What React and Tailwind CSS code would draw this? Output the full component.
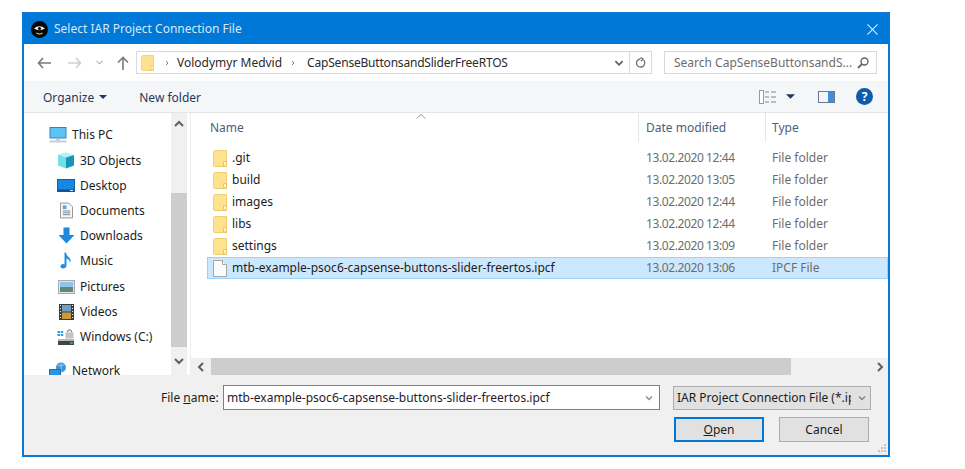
import React from "react";

const folders = [
  { name: ".git", date: "13.02.2020 12:44" },
  { name: "build", date: "13.02.2020 13:05" },
  { name: "images", date: "13.02.2020 12:44" },
  { name: "libs", date: "13.02.2020 12:44" },
  { name: "settings", date: "13.02.2020 13:09" },
];

const FILE_NAME = "mtb-example-psoc6-capsense-buttons-slider-freertos.ipcf";

function Folder({ className }) {
  return (
    <svg viewBox="0 0 14 17" className={className}>
      <path d="M0.5 2.5 Q0.5 0.5 2.5 0.5 H13.5 V16.5 H2 Q0.5 16.5 0.5 15 Z" fill="#fde38f" stroke="#f0cf72" />
      <path d="M10.5 16 V11.5 H13.5 V16 Z" fill="#fff3c4" stroke="#e6bf55" strokeWidth="0.8" />
    </svg>
  );
}

function FileIcon() {
  return (
    <svg viewBox="0 0 14 17" className="w-[14px] h-[17px] shrink-0">
      <path d="M0.5 0.5 H9.5 L13.5 4.5 V16.5 H0.5 Z" fill="#fbfbfb" stroke="#a5a5a5" />
      <path d="M9.5 0.5 V4.5 H13.5" fill="#fff" stroke="#a5a5a5" />
    </svg>
  );
}

function NavIcon({ name }) {
  if (name === "pc")
    return (
      <svg viewBox="0 0 18 16" className="w-[18px] h-[16px]">
        <rect x="1" y="0.5" width="16" height="10.5" fill="#5cc3f5" stroke="#3f7fb5" />
        <rect x="7" y="11" width="4" height="2.5" fill="#b8c4cf" />
        <rect x="0.5" y="13.5" width="17" height="2" fill="#c4ced6" />
      </svg>
    );
  if (name === "3d")
    return (
      <svg viewBox="0 0 18 17" className="w-[18px] h-[17px]">
        <path d="M9 0.5 L1 3 V13.5 L9 16.5 Z" fill="#6fe0e6" />
        <path d="M1 3 L9 5.5 L17 3 L9 0.5 Z" fill="#b5f2f2" />
        <path d="M9 5.5 V16.5 L17 13.5 V3 Z" fill="#1a95b8" />
      </svg>
    );
  if (name === "desktop")
    return (
      <svg viewBox="0 0 18 13" className="w-[18px] h-[13px]">
        <rect x="0.5" y="0.5" width="17" height="12" fill="#1787e0" stroke="#0e62aa" />
        <rect x="1" y="10.5" width="16" height="2" fill="#0c4f91" />
        <rect x="13" y="11" width="3" height="1" fill="#cfe6f8" />
      </svg>
    );
  if (name === "docs")
    return (
      <svg viewBox="0 0 14 17" className="w-[13px] h-[17px]">
        <path d="M0.5 0.5 H9.5 L13.5 4.5 V16.5 H0.5 Z" fill="#f7f7f7" stroke="#8c8c8c" />
        <rect x="3" y="3" width="4" height="4" fill="#5da6dd" />
        <path d="M3 9 H11 M3 11 H11 M3 13 H11" stroke="#6f8294" />
      </svg>
    );
  if (name === "down")
    return (
      <svg viewBox="0 0 17 17" className="w-[17px] h-[17px]">
        <path d="M5.5 0.5 H11.5 V8 H16.5 L8.5 16.5 L0.5 8 H5.5 Z" fill="#2188dd" />
      </svg>
    );
  if (name === "music")
    return (
      <svg viewBox="0 0 12 17" className="w-[12px] h-[17px]">
        <path d="M4.5 0.5 H6 Q6.5 4 9.5 6 Q11.5 8 10 11 Q10 7.5 6.5 6.5 V13.5 Q6 16.5 3 16.5 Q0.5 16.5 0.5 14.5 Q0.5 12 3 12 Q4 12 4.5 12.5 Z" fill="#1f8fe6" />
      </svg>
    );
  if (name === "pics")
    return (
      <svg viewBox="0 0 17 14" className="w-[17px] h-[14px]">
        <rect x="0.5" y="0.5" width="16" height="13" fill="#e4e4e4" stroke="#a9a9a9" />
        <rect x="2" y="2" width="13" height="5" fill="#8fc3e8" />
        <rect x="2" y="7" width="13" height="5" fill="#5f8a74" />
      </svg>
    );
  if (name === "video")
    return (
      <svg viewBox="0 0 15 16" className="w-[15px] h-[16px]">
        <rect x="0" y="0" width="15" height="16" fill="#3c3c3c" />
        <rect x="3" y="1" width="9" height="6.5" fill="#6e9fc4" />
        <rect x="3" y="8.5" width="9" height="6.5" fill="#c9993c" />
        <path d="M1 1.5 H2 M1 4.5 H2 M1 7.5 H2 M1 10.5 H2 M1 13.5 H2 M13 1.5 H14 M13 4.5 H14 M13 7.5 H14 M13 10.5 H14 M13 13.5 H14" stroke="#e8e8e8" />
      </svg>
    );
  if (name === "drive")
    return (
      <svg viewBox="0 0 18 16" className="w-[18px] h-[16px]">
        <path d="M0.5 2 H3 V4 H0.5 Z M3.8 2 H6.2 V4 H3.8 Z M0.5 5 H3 V7 H0.5 Z M3.8 5 H6.2 V7 H3.8 Z" fill="#2c9be8" />
        <rect x="8.5" y="3.5" width="8" height="6" fill="#c3c3c3" />
        <path d="M10.5 3.5 V2 Q12.5 0 14.5 2 V3.5" fill="none" stroke="#9a9a9a" strokeWidth="1.2" />
        <rect x="1" y="10" width="16" height="2" fill="#b9b9b9" />
        <rect x="1" y="12" width="16" height="4" fill="#3f4446" />
        <rect x="13" y="13.5" width="3" height="1" fill="#7fe05a" />
      </svg>
    );
  return (
    <svg viewBox="0 0 18 16" className="w-[18px] h-[16px]">
      <circle cx="12" cy="5.5" r="5" fill="#3f97d9" />
      <path d="M8.5 3 Q12 5 15.5 2.5 M12 0.5 V10" stroke="#9fd2f2" strokeWidth="0.8" fill="none" />
      <rect x="0.5" y="7.5" width="11" height="7.5" fill="#2b93e4" stroke="#1b6fb5" />
    </svg>
  );
}

function NavItem({ icon, label, className }) {
  return (
    <div className={`flex items-center ${className}`}>
      <div className="flex justify-center w-[18px] mr-[5px]">
        <NavIcon name={icon} />
      </div>
      <span className="leading-[13px]">{label}</span>
    </div>
  );
}

function Chevron({ dir, className }) {
  const d = {
    up: "M1 6 L5 2 L9 6",
    down: "M1 2 L5 6 L9 2",
    left: "M6 1 L2 5 L6 9",
    right: "M2 1 L6 5 L2 9",
  }[dir];
  const box = dir === "up" || dir === "down" ? "0 0 10 8" : "0 0 8 10";
  const size = dir === "up" || dir === "down" ? "w-[10px] h-[8px]" : "w-[8px] h-[10px]";
  return (
    <svg viewBox={box} className={`${size} ${className}`}>
      <path d={d} fill="none" stroke="#606060" strokeWidth="2" />
    </svg>
  );
}

function Row({ name, date, type, selected, icon }) {
  return (
    <div
      className={`flex items-center h-[22px] ml-[16px] pl-[5px] border ${
        selected ? "bg-[#cce8ff] border-[#99d1ff]" : "border-transparent"
      }`}
    >
      <div className="w-[14px] flex justify-center shrink-0">{icon}</div>
      <span className="ml-[5px] w-[414px] shrink-0 text-[#1c1c1c] whitespace-nowrap">{name}</span>
      <span className="w-[126px] shrink-0 text-[#6d6d6d] tracking-[-0.4px]">{date}</span>
      <span className="text-[#6d6d6d]">{type}</span>
    </div>
  );
}

export default function App() {
  return (
    <div className="w-[965px] h-[469px] bg-white pt-[12px] pl-[22px] text-[12px] font-['Noto_Sans','Open_Sans',sans-serif] overflow-hidden">
      <div className="w-[868px] h-[445px] border-2 border-[#0a78d7] flex flex-col bg-white">
        {/* title bar */}
        <div className="h-[30px] shrink-0 bg-[#0078d7] flex items-center text-white">
          <svg viewBox="0 0 17 17" className="w-[17px] h-[17px] ml-[7px]">
            <circle cx="8.5" cy="8.5" r="8.5" fill="#060606" />
            <path d="M3 7.5 Q8.5 3 14 7.5 Q8.5 11 3 7.5 Z" fill="#f5f5f5" />
            <circle cx="8.5" cy="7.5" r="1.6" fill="#060606" />
            <path d="M5.5 12 Q8.5 14 11.5 12" stroke="#f4d43a" strokeWidth="1.2" fill="none" />
          </svg>
          <span className="ml-[6px] text-[#d7e9f8]">Select IAR Project Connection File</span>
          <svg viewBox="0 0 12 12" className="w-[11px] h-[11px] ml-auto mr-[10px]">
            <path d="M0.5 0.5 L11.5 11.5 M11.5 0.5 L0.5 11.5" stroke="#e6f2fb" strokeWidth="1.1" />
          </svg>
        </div>

        {/* address row */}
        <div className="h-[37px] shrink-0 flex items-center bg-white">
          <svg viewBox="0 0 14 12" className="w-[14px] h-[12px] ml-[13px]">
            <path d="M6 1 L1.5 6 L6 11 M1.5 6 H14" fill="none" stroke="#7a7a7a" strokeWidth="1.6" />
          </svg>
          <svg viewBox="0 0 14 12" className="w-[14px] h-[12px] ml-[17px]">
            <path d="M8 1 L12.5 6 L8 11 M12.5 6 H0" fill="none" stroke="#d0d0d0" strokeWidth="1.6" />
          </svg>
          <svg viewBox="0 0 8 5" className="w-[7px] h-[5px] ml-[14px]">
            <path d="M0.5 0.5 L4 4 L7.5 0.5" fill="none" stroke="#a8a8a8" strokeWidth="1.2" />
          </svg>
          <svg viewBox="0 0 12 14" className="w-[12px] h-[14px] ml-[14px]">
            <path d="M1 6.5 L6 1.5 L11 6.5 M6 1.5 V14" fill="none" stroke="#7a7a7a" strokeWidth="1.6" />
          </svg>
          <div className="ml-[7px] w-[516px] h-[23px] border border-[#d9d9d9] flex items-center text-[#2b2b2b]">
            <Folder className="w-[13px] h-[16px] ml-[4px]" />
            <Chevron dir="right" className="ml-[9px] scale-50 opacity-80" />
            <span className="ml-[6px]">Volodymyr Medvid</span>
            <Chevron dir="right" className="ml-[7px] scale-50 opacity-80" />
            <span className="ml-[10px] tracking-[-0.2px]">CapSenseButtonsandSliderFreeRTOS</span>
            <Chevron dir="down" className="ml-auto mr-[5px] scale-90" />
            <div className="w-px h-full bg-[#d9d9d9]" />
            <svg viewBox="0 0 12 12" className="w-[11px] h-[12px] mx-[5px]">
              <path d="M9.5 3 A4.5 4.5 0 1 1 6 1.5 M6 0 L9 1.7 L6.5 4" fill="none" stroke="#666" strokeWidth="1.3" />
            </svg>
          </div>
          <div className="ml-[12px] w-[213px] h-[23px] border border-[#d9d9d9] flex items-center text-[#6d6d6d] pl-[9px]">
            <span className="whitespace-nowrap">Search CapSenseButtonsandS...</span>
            <svg viewBox="0 0 12 12" className="w-[12px] h-[12px] ml-auto mr-[7px]">
              <circle cx="7.5" cy="4.5" r="3.5" fill="none" stroke="#666" strokeWidth="1.4" />
              <path d="M5 7 L1 11" stroke="#666" strokeWidth="1.8" />
            </svg>
          </div>
        </div>

        {/* command bar */}
        <div className="h-[32px] shrink-0 bg-[#f5f6f7] border-b border-[#e5e5e5] flex items-center text-[#1e395b]">
          <span className="ml-[19px] pt-[2px]">Organize</span>
          <svg viewBox="0 0 8 4" className="w-[8px] h-[4px] ml-[5px]">
            <path d="M0 0 H8 L4 4 Z" fill="#1e395b" />
          </svg>
          <span className="ml-[32px] pt-[2px]">New folder</span>
          <svg viewBox="0 0 17 14" className="w-[17px] h-[14px] ml-auto">
            <rect x="0.5" y="0.5" width="4" height="13" fill="#fff" stroke="#9a9a9a" />
            <path d="M6 2 H10 M12 2 H17 M6 7 H10 M12 7 H17 M6 12 H10 M12 12 H17" stroke="#7c8794" />
          </svg>
          <svg viewBox="0 0 8 4" className="w-[9px] h-[5px] ml-[10px]">
            <path d="M0 0 H8 L4 4 Z" fill="#1e395b" />
          </svg>
          <svg viewBox="0 0 17 12" className="w-[17px] h-[12px] ml-[23px]">
            <rect x="0.5" y="0.5" width="16" height="11" fill="#f3f6f9" stroke="#6b7a8a" />
            <rect x="10" y="1" width="6" height="10" fill="#3e8fdc" />
          </svg>
          <div className="w-[17px] h-[17px] rounded-full bg-[#0e5cae] text-white font-bold text-[12px] flex items-center justify-center ml-[21px] mr-[15px]">
            ?
          </div>
        </div>

        {/* main area */}
        <div className="h-[262px] shrink-0 flex bg-white">
          <div className="w-[147px] shrink-0 text-[#1c1c1c] pt-[9px]">
            <NavItem icon="pc" label="This PC" className="h-[25px] pl-[25px]" />
            <NavItem icon="3d" label="3D Objects" className="h-[25px] pl-[33px] mt-[1px]" />
            <NavItem icon="desktop" label="Desktop" className="h-[25px] pl-[33px]" />
            <NavItem icon="docs" label="Documents" className="h-[25px] pl-[33px]" />
            <NavItem icon="down" label="Downloads" className="h-[25px] pl-[33px]" />
            <NavItem icon="music" label="Music" className="h-[25px] pl-[33px]" />
            <NavItem icon="pics" label="Pictures" className="h-[25px] pl-[33px] mt-[1px]" />
            <NavItem icon="video" label="Videos" className="h-[25px] pl-[33px]" />
            <NavItem icon="drive" label="Windows (C:)" className="h-[25px] pl-[33px]" />
            <NavItem icon="net" label="Network" className="h-[16px] pl-[25px] mt-[13px]" />
          </div>

          {/* sidebar scrollbar */}
          <div className="w-[16px] shrink-0 bg-[#f0f0f0] flex flex-col">
            <div className="h-[22px] flex items-center justify-center">
              <Chevron dir="up" />
            </div>
            <div className="h-[58px]" />
            <div className="h-[154px] bg-[#cdcdcd]" />
            <div className="flex-1 flex items-center justify-center">
              <Chevron dir="down" />
            </div>
          </div>

          {/* file list */}
          <div className="flex-1 min-w-0 ml-[3px] border-l border-[#eeeeee] flex flex-col">
            <div className="h-[29px] shrink-0 flex items-center text-[#4c607a] relative">
              <span className="pl-[19px] w-[447px] pt-[1px]">Name</span>
              <span className="h-full w-px bg-[#e5e5e5]" />
              <span className="pl-[7px] w-[126px] pt-[1px]">Date modified</span>
              <span className="h-full w-px bg-[#e5e5e5]" />
              <span className="pl-[6px] pt-[1px]">Type</span>
              <svg viewBox="0 0 10 5" className="absolute left-[225px] top-[1px] w-[10px] h-[5px]">
                <path d="M0.5 4.5 L5 0.5 L9.5 4.5" fill="none" stroke="#9a9a9a" />
              </svg>
            </div>
            <div className="flex-1 pt-[5px] min-h-0">
              {folders.map((f) => (
                <Row
                  key={f.name}
                  name={f.name}
                  date={f.date}
                  type="File folder"
                  icon={<Folder className="w-[14px] h-[17px] shrink-0" />}
                />
              ))}
              <Row name={FILE_NAME} date="13.02.2020 13:06" type="IPCF File" selected icon={<FileIcon />} />
            </div>
            <div className="h-[17px] shrink-0 bg-[#f0f0f0] flex items-center">
              <div className="w-[20px] flex justify-center">
                <Chevron dir="left" />
              </div>
              <div className="w-[580px] h-full bg-[#cdcdcd]" />
              <Chevron dir="right" className="ml-auto mr-[4px]" />
            </div>
          </div>
        </div>

        {/* bottom */}
        <div className="flex-1 bg-[#f0f0f0] pt-[10px] text-[#1c1c1c]">
          <div className="flex items-center h-[25px]">
            <span className="ml-[137px] w-[62px] whitespace-nowrap pt-[1px]">
              File <u>n</u>ame:
            </span>
            <div className="w-[437px] h-[25px] bg-white border border-[#7f7f7f] flex items-center pl-[3px] text-[#2a1a2a]">
              <span className="whitespace-nowrap pt-[1px]">{FILE_NAME}</span>
              <Chevron dir="down" className="ml-auto mr-[5px] scale-75 opacity-70" />
            </div>
            <div className="ml-[13px] w-[198px] h-[24px] bg-[#e1e1e1] border border-[#adadad] flex items-center pl-[3px]">
              <span className="whitespace-nowrap w-[174px] overflow-hidden">IAR Project Connection File (*.ipcf)</span>
              <Chevron dir="down" className="ml-[6px] scale-75 opacity-70" />
            </div>
          </div>
          <div className="flex items-start mt-[7px] ml-[650px]">
            <div className="w-[90px] h-[25px] bg-[#e1e1e1] border-2 border-[#0078d7] flex items-center justify-center">
              <span className="pt-[1px]">
                <u>O</u>pen
              </span>
            </div>
            <div className="ml-[15px] w-[90px] h-[25px] bg-[#e1e1e1] border border-[#adadad] flex items-center justify-center pt-[1px]">
              Cancel
            </div>
            <svg viewBox="0 0 8 8" className="w-[8px] h-[8px] ml-[9px] mt-[27px] shrink-0 overflow-visible">
              <path d="M6 0 H8 V2 H6 Z M3 3 H5 V5 H3 Z M6 3 H8 V5 H6 Z M0 6 H2 V8 H0 Z M3 6 H5 V8 H3 Z M6 6 H8 V8 H6 Z" fill="#c4c4c4" />
            </svg>
          </div>
        </div>
      </div>
    </div>
  );
}
